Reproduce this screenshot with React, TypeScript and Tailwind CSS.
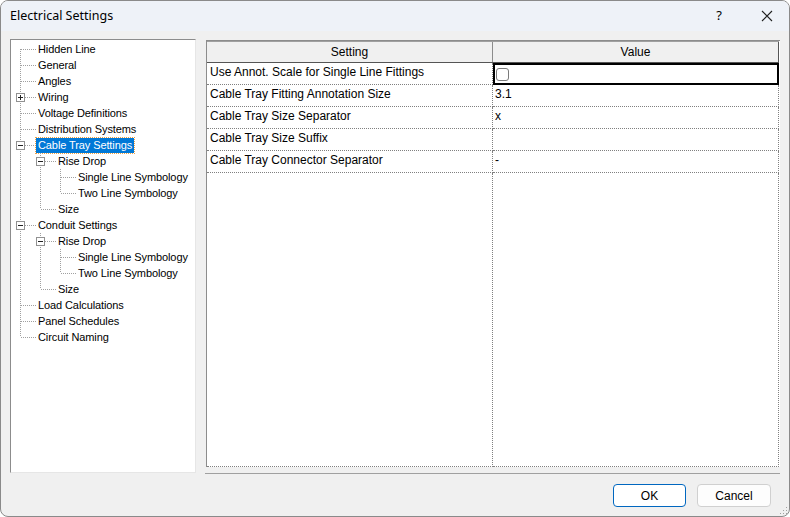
import React from "react";

type Node = {
  label: string;
  level: number;
  // does each ancestor (level 0..level-1) still have siblings below it
  trail: boolean[];
  hasNext: boolean;
  first?: boolean;
  expander?: "plus" | "minus";
  selected?: boolean;
};

const tree: Node[] = [
  { label: "Hidden Line", level: 0, trail: [], hasNext: true, first: true },
  { label: "General", level: 0, trail: [], hasNext: true },
  { label: "Angles", level: 0, trail: [], hasNext: true },
  { label: "Wiring", level: 0, trail: [], hasNext: true, expander: "plus" },
  { label: "Voltage Definitions", level: 0, trail: [], hasNext: true },
  { label: "Distribution Systems", level: 0, trail: [], hasNext: true },
  { label: "Cable Tray Settings", level: 0, trail: [], hasNext: true, expander: "minus", selected: true },
  { label: "Rise Drop", level: 1, trail: [true], hasNext: true, expander: "minus" },
  { label: "Single Line Symbology", level: 2, trail: [true, true], hasNext: true },
  { label: "Two Line Symbology", level: 2, trail: [true, true], hasNext: false },
  { label: "Size", level: 1, trail: [true], hasNext: false },
  { label: "Conduit Settings", level: 0, trail: [], hasNext: true, expander: "minus" },
  { label: "Rise Drop", level: 1, trail: [true], hasNext: true, expander: "minus" },
  { label: "Single Line Symbology", level: 2, trail: [true, true], hasNext: true },
  { label: "Two Line Symbology", level: 2, trail: [true, true], hasNext: false },
  { label: "Size", level: 1, trail: [true], hasNext: false },
  { label: "Load Calculations", level: 0, trail: [], hasNext: true },
  { label: "Panel Schedules", level: 0, trail: [], hasNext: true },
  { label: "Circuit Naming", level: 0, trail: [], hasNext: false },
];

const rows = [
  { name: "Use Annot. Scale for Single Line Fittings", value: "check" },
  { name: "Cable Tray Fitting Annotation Size", value: "3.1" },
  { name: "Cable Tray Size Separator", value: "x" },
  { name: "Cable Tray Size Suffix", value: "" },
  { name: "Cable Tray Connector Separator", value: "-" },
];

const dot = { stroke: "#a0a0a0", strokeWidth: 1, strokeDasharray: "1 1" };

function TrailCell({ on }: { on: boolean }) {
  return (
    <svg width="20" height="16" className="shrink-0">
      {on && <line x1="9.5" y1="0" x2="9.5" y2="16" {...dot} />}
    </svg>
  );
}

function OwnCell({ n }: { n: Node }) {
  return (
    <svg width="26" height="16" className="shrink-0">
      <line x1="9.5" y1={n.first ? 8 : 0} x2="9.5" y2={n.hasNext ? 16 : 8} {...dot} />
      <line x1="10" y1="8.5" x2="26" y2="8.5" {...dot} />
      {n.expander && (
        <g>
          <rect x="5.5" y="4.5" width="8" height="8" fill="#fff" stroke="#919191" />
          <line x1="7" y1="8.5" x2="12" y2="8.5" stroke="#222" />
          {n.expander === "plus" && <line x1="9.5" y1="6" x2="9.5" y2="11" stroke="#222" />}
        </g>
      )}
    </svg>
  );
}

function TreeRow({ n }: { n: Node }) {
  return (
    <div className="flex h-[16px] items-center">
      {n.trail.map((t, i) => (
        <TrailCell key={i} on={t} />
      ))}
      <OwnCell n={n} />
      <span
        className={`ml-[-1px] h-[15px] px-[2px] leading-[15px] whitespace-nowrap tracking-[-0.1px] ${
          n.selected ? "bg-[#0078d7] text-white outline-1 outline-dotted outline-[#f0a040]" : "text-black"
        }`}
      >
        {n.label}
      </span>
    </div>
  );
}

function App() {
  return (
    <div
      className="w-[790px] h-[517px] flex flex-col bg-[#f0f0f0] border border-[#8a8a8a] rounded-t-[8px] rounded-b-[8px] overflow-hidden text-black"
      style={{ fontFamily: '"Liberation Sans", Arial, sans-serif' }}
    >
      {/* title bar */}
      <div className="h-[30px] shrink-0 flex items-center bg-[#eef2f8] pl-[9px]">
        <span className="text-[12.5px]" style={{ fontFamily: '"Noto Sans", "Liberation Sans", sans-serif' }}>
          Electrical Settings
        </span>
        <span className="ml-auto mr-[39px] text-[13px]" style={{ fontFamily: '"Noto Sans", sans-serif' }}>
          ?
        </span>
        <svg width="12" height="12" viewBox="0 0 12 12" className="mr-[16px]">
          <path d="M1 1 L11 11 M11 1 L1 11" stroke="#222" strokeWidth="1.1" />
        </svg>
      </div>

      <div className="flex-1 flex flex-col px-[9px] pt-[8px]">
        <div className="flex">
          {/* tree */}
          <div className="w-[186px] h-[434px] pt-[1px] bg-white border border-[#e6e6e6] border-l-[#8c8c8c] border-t-[#8c8c8c] text-[11px] overflow-hidden">
            {tree.map((n, i) => (
              <TreeRow key={i} n={n} />
            ))}
          </div>

          {/* table */}
          <div className="ml-[10px] w-[574px] flex flex-col">
            <div className="h-[427px] mt-[1px] bg-white border-l border-t border-[#8c8c8c] flex flex-col text-[12px]">
              <div className="w-[572px] grid grid-cols-[286px_286px] h-[22px] bg-[#f0f0f0] border-b border-[#555] border-t border-t-[#a0a0a0]">
                <div className="border-r border-[#8c8c8c] flex items-center justify-center">Setting</div>
                <div className="border-r border-[#555] flex items-center justify-center">Value</div>
              </div>
              {rows.map((r, i) => (
                <div key={i} className="w-[572px] grid grid-cols-[286px_286px] h-[22px]">
                  <div className="border-r border-b border-dotted border-[#808080] pl-[3px] pb-[3px] flex items-center whitespace-nowrap">
                    {r.name}
                  </div>
                  {r.value === "check" ? (
                    <div className="border-2 border-black flex items-center pl-[1px]">
                      <span className="w-[13px] h-[13px] rounded-[3px] border border-[#7a7a7a] bg-white" />
                    </div>
                  ) : (
                    <div className="border-r border-b border-dotted border-[#808080] pl-[2px] pb-[3px] flex items-center">
                      {r.value}
                    </div>
                  )}
                </div>
              ))}
              <div className="w-[572px] flex-1 grid grid-cols-[286px_286px]">
                <div className="border-r border-b border-dotted border-[#808080]" />
                <div className="border-r border-b border-dotted border-[#808080]" />
              </div>
            </div>
            <div className="mt-[6px] h-[1px] bg-[#a0a0a0] ml-[-1px]" />
          </div>
        </div>

        {/* buttons */}
        <div className="flex justify-end gap-[11px] mt-[10px] mr-[9px] text-[12px]">
          <button className="w-[73px] h-[23px] bg-white border border-[#0067c0] rounded-[4px]">OK</button>
          <button className="w-[74px] h-[23px] bg-[#fdfdfd] border border-[#d0d0d0] rounded-[4px]">Cancel</button>
        </div>
        <div className="flex justify-end mt-auto mr-[-8px] mb-[1px]">
          <svg width="8" height="8" viewBox="0 0 8 8">
            <rect x="6" y="0" width="1" height="1" fill="#a0a0a0" />
            <rect x="3" y="3" width="1" height="1" fill="#a0a0a0" />
            <rect x="6" y="3" width="1" height="1" fill="#a0a0a0" />
            <rect x="0" y="6" width="1" height="1" fill="#a0a0a0" />
            <rect x="3" y="6" width="1" height="1" fill="#a0a0a0" />
            <rect x="6" y="6" width="1" height="1" fill="#a0a0a0" />
          </svg>
        </div>
      </div>
    </div>
  );
}

export default App;
